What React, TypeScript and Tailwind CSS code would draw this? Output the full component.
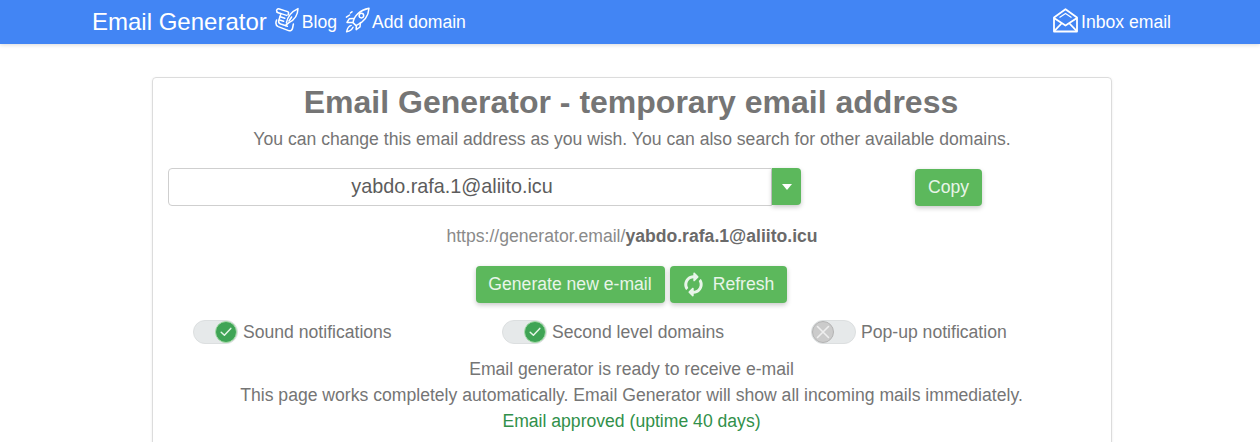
import React from "react";
import { FaSyncAlt } from "react-icons/fa";

const font = { fontFamily: '"Liberation Sans", Arial, sans-serif' };

function BlogIcon() {
  return (
    <svg width="24" height="26" viewBox="0 0 24 26" fill="none" stroke="white" strokeWidth="1.5" strokeLinecap="round" strokeLinejoin="round">
      <path d="M2 5 C0.8 3.2 2.4 1.4 4.4 2 L12.6 4.6 C13.6 5 13.8 5.8 13.4 6.8 L13 8" />
      <path d="M2 5 C3 6.4 5 6.2 6 6.6 L3.8 13.2 C3.2 15.4 4 16.4 5.6 17 L12.4 19.2" />
      <path d="M6 6.6 L11.6 8.4 M5.2 9.8 L9.8 11.2 M4.6 13 L8.6 14.2" />
      <path d="M11.4 15.8 C12.6 9.6 17 4.4 23 1.6 C22.8 7.6 19.6 13 14 15.6 L10.6 18.4" />
      <path d="M16.6 10 L14 14" />
      <path d="M1.6 13 C0.4 16 1 18.6 3.2 19.6 L13.6 23.6 C15.6 24.2 17.2 23.2 17.6 21 L18.4 17" />
    </svg>
  );
}

function RocketIcon() {
  return (
    <svg width="25" height="26" viewBox="0 0 25 26" fill="none" stroke="white" strokeWidth="1.5" strokeLinecap="round" strokeLinejoin="round">
      <path d="M8 15.6 C9 8.6 15 3 24 1.2 C23.4 10 17.4 15.8 11 18.6 Z" />
      <circle cx="16.4" cy="8.6" r="2.3" />
      <path d="M8.8 11.6 L4.2 11.8 L2 15.4 L7.4 15.6" />
      <path d="M15.4 15.4 L15 20 L11.2 22.6 L11.4 18.4" />
      <path d="M6.2 18.4 C4 19 2.4 21.2 1.6 24.8 C4.8 24.2 7 22.6 8 20.2" />
      <path d="M1.4 10.2 L4.6 8 M5.4 6 L7 4.8" />
    </svg>
  );
}

function InboxIcon() {
  return (
    <svg width="25" height="25" viewBox="0 0 25 25" fill="none" stroke="white" strokeWidth="1.8" strokeLinejoin="round">
      <path d="M1 9.5 L12.5 1.2 L24 9.5 V23.5 H1 Z" />
      <path d="M1 10 L12.5 17.5 L24 10" />
      <path d="M1.2 23.2 L9 15 M23.8 23.2 L16 15" />
      <path d="M6.5 9.5 L12.5 5.4 L18.5 9.5" strokeWidth="1.2" />
    </svg>
  );
}

function Toggle({ on, label }: { on: boolean; label: string }) {
  return (
    <div className="flex items-center">
      <div className={`flex h-6 w-[45px] items-center rounded-full border border-[#dcdfe0] bg-[#e6e9ea] ${on ? "justify-end" : "justify-start"}`}>
        {on ? (
          <span className="flex h-[22px] w-[22px] items-center justify-center rounded-full border border-[#a5dba8] bg-[#3fa455]">
            <svg width="12" height="10" viewBox="0 0 12 10" fill="none" stroke="#e3f5e5" strokeWidth="1.5" strokeLinecap="round" strokeLinejoin="round">
              <path d="M1.2 5.2 L4.4 8.2 L10.8 1.4" />
            </svg>
          </span>
        ) : (
          <span className="flex h-[22px] w-[22px] items-center justify-center rounded-full border border-[#b4b4b4] bg-[#cbcbcb]">
            <svg width="14" height="14" viewBox="0 0 14 14" fill="none" stroke="#efefef" strokeWidth="1.6" strokeLinecap="round">
              <path d="M1.5 1.5 L12.5 12.5 M12.5 1.5 L1.5 12.5" />
            </svg>
          </span>
        )}
      </div>
      <span className="ml-[5px] text-[17.6px] leading-6 text-[#757575]">{label}</span>
    </div>
  );
}

const btn =
  "flex items-center justify-center rounded bg-[#5cb85c] text-[17.6px] text-[#e8f5e9] shadow-[0_2px_5px_rgba(0,0,0,0.22)]";

export default function App() {
  return (
    <div style={font} className="h-[442px] w-[1260px] overflow-hidden bg-white">
      <nav className="flex h-11 items-center justify-between bg-[#4285f4] pl-[92px] pr-[89px] text-white shadow-[0_1px_4px_rgba(0,0,0,0.15)]">
        <div className="flex items-center">
          <span className="text-2xl leading-none">Email Generator</span>
          <span className="mb-1 ml-2 mr-[3px]"><BlogIcon /></span>
          <span className="text-[17.6px]">Blog</span>
          <span className="mb-1 ml-[8px] mr-[2px]"><RocketIcon /></span>
          <span className="text-[17.6px]">Add domain</span>
        </div>
        <div className="flex items-center">
          <span className="mb-1 mr-[3px]"><InboxIcon /></span>
          <span className="text-[17.6px]">Inbox email</span>
        </div>
      </nav>

      <main className="mx-[152px] mt-[33px] h-[420px] w-[960px] rounded border border-[#dcdcdc] px-[15px] shadow-[0_1px_3px_rgba(0,0,0,0.08)]">
        <h1 className="mt-[6px] pr-[2px] text-center text-[32px] font-bold leading-9 text-[#757575]">
          Email Generator - temporary email address
        </h1>
        <p className="mt-[7px] text-center text-[17.6px] leading-6 text-[#757575]">
          You can change this email address as you wish. You can also search for other available domains.
        </p>

        <div className="mt-[17px] flex items-center">
          <div className="flex w-[633px] shrink-0">
            <div className="flex h-[38px] w-[604px] items-center justify-center rounded-l border border-[#cfcfcf] pr-9 text-[19.8px] text-[#5c5c5c]">
              yabdo.rafa.1@aliito.icu
            </div>
            <button className="flex h-[37px] w-[29px] items-center justify-center rounded-r bg-[#5cb85c] shadow-[0_2px_5px_rgba(0,0,0,0.22)]">
              <span className="h-0 w-0 border-x-[5px] border-t-[6px] border-x-transparent border-t-white" />
            </button>
          </div>
          <div className="flex flex-1 justify-center">
            <button className={`${btn} h-[37px] w-[67px]`}>Copy</button>
          </div>
        </div>

        <p className="mt-[18px] text-center text-[17.6px] leading-6 text-[#8a8a8a]">
          https://generator.email/<b className="text-[#6a6a6a]">yabdo.rafa.1@aliito.icu</b>
        </p>

        <div className="mt-[18px] flex justify-center gap-[5px] pr-[2px]">
          <button className={`${btn} h-[37px] w-[189px]`}>Generate new e-mail</button>
          <button className={`${btn} h-[37px] w-[117px] gap-[10px] pl-[2px]`}>
            <FaSyncAlt className="h-[19px] w-[19px] -rotate-45" />
            Refresh
          </button>
        </div>

        <div className="mt-[17px] grid grid-cols-[309px_309px_1fr] pl-[25px]">
          <Toggle on label="Sound notifications" />
          <Toggle on label="Second level domains" />
          <Toggle on={false} label="Pop-up notification" />
        </div>

        <div className="mt-3 pr-px text-center text-[17.6px] leading-[26px] text-[#757575]">
          <p>Email generator is ready to receive e-mail</p>
          <p>This page works completely automatically. Email Generator will show all incoming mails immediately.</p>
          <p className="text-[#31904a]">Email approved (uptime 40 days)</p>
        </div>
      </main>
    </div>
  );
}
